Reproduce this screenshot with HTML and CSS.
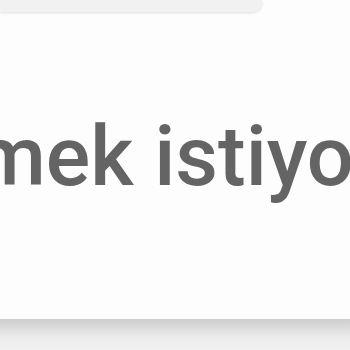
FILE: index.html
```html
<!DOCTYPE html>
<html lang="tr">
<head>
    <meta charset="UTF-8">
    <meta name="viewport" content="width=device-width, initial-scale=1.0">
    <title>Mesaj</title>
    <link rel="stylesheet" href="styles.css">
</head>
<body>
    <div class="page">
        <div class="search-box"></div>
        <p class="message">Öğrenmek istiyorum</p>
        <div class="bottom-bar"></div>
    </div>
</body>
</html>
```
FILE: styles.css
```css
body {
    margin: 0;
    background-color: #fdfdfd;
    font-family: Roboto, "Liberation Sans", sans-serif;
}
.page {
    width: 350px;
    height: 350px;
    overflow: hidden;
    display: flex;
    flex-direction: column;
}
.search-box {
    width: 262px;
    height: 12px;
    flex-shrink: 0;
    background-color: #f1f1f1;
    border-radius: 0 0 9px 0;
    box-shadow: 0 1px 3px rgba(0, 0, 0, 0.12);
}
.message {
    margin: 96px 0 0 -250px;
    white-space: nowrap;
    font-size: 83px;
    font-weight: 500;
    line-height: 97px;
    color: #646464;
}
.bottom-bar {
    margin-top: auto;
    height: 31px;
    flex-shrink: 0;
    background: linear-gradient(#cdcdcd, #ececec 60%, #f1f1f1);
}
```
